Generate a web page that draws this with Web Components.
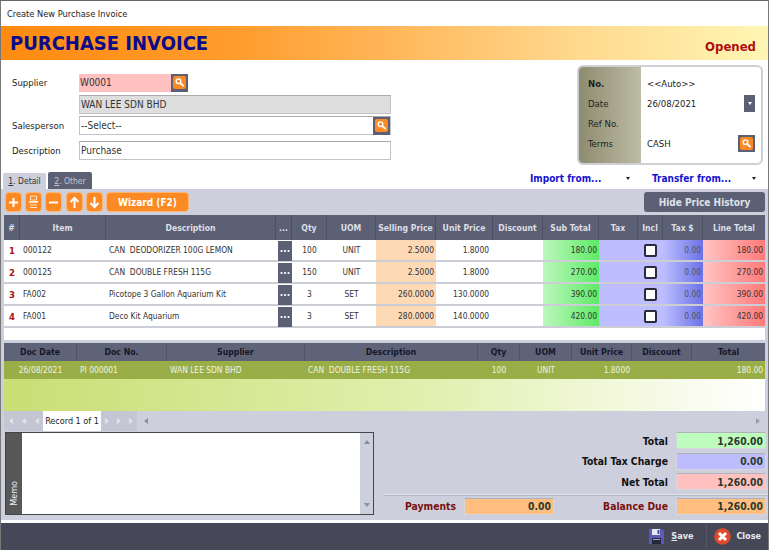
<!DOCTYPE html>
<html><head><meta charset="utf-8"><title>Purchase Invoice</title>
<style>
html,body{margin:0;padding:0;background:#fff}
body{font:9px "DejaVu Sans Condensed","DejaVu Sans",sans-serif;color:#333}
</style></head><body>
<inv-window>
  <inv-titlebar>Create New Purchase Invoice</inv-titlebar>
  <inv-banner title-text="PURCHASE INVOICE" status="Opened"></inv-banner>
  <inv-head></inv-head>
  <inv-tabs></inv-tabs>
  <inv-panel></inv-panel>
  <inv-footer></inv-footer>
</inv-window>
<script>
function def(name, css, html, init){
  customElements.define(name, class extends HTMLElement{
    constructor(){super();const s=this.attachShadow({mode:'open'});
      s.innerHTML='<style>'+css+'</style>'+(typeof html==='function'?html(this):html);}
    connectedCallback(){if(init)init(this)}
  });
}
const FONT='font-family:"DejaVu Sans Condensed","DejaVu Sans",sans-serif;';

def('inv-window',`:host{display:flex;flex-direction:column;width:769px;height:550px;box-sizing:border-box;border-top:1px solid #666;border-left:1px solid #777;border-right:1px solid #777;overflow:hidden;background:#fff;${FONT}}`,`<slot></slot>`);

def('inv-titlebar',`:host{display:flex;align-items:center;height:25px;padding-left:6px;font-size:9.2px;color:#222;flex:none}`,`<slot></slot>`);

def('inv-banner',`:host{display:flex;justify-content:space-between;height:34px;flex:none;padding:0 12px 0 9px;background:linear-gradient(90deg,#ff8a10 0%,#ff9c2c 30%,#ffb85c 52%,#ffd98e 75%,#fff6b4 100%)}
.t{font-size:20px;font-weight:bold;color:#0b0b8c;line-height:35px}
.s{font-size:13px;font-weight:bold;color:#b00d0d;align-self:flex-end;line-height:27px}`,
 h=>`<span class="t">${h.getAttribute('title-text')}</span><span class="s">${h.getAttribute('status')}</span>`);

const searchSvg=`<svg viewBox="0 0 13 13" width="13" height="13"><rect width="13" height="13" rx="2" fill="#fb8a24"/><circle cx="5.5" cy="5.2" r="2.3" fill="none" stroke="#fff" stroke-width="1.4"/><path d="M7.2 7l3 2.6" stroke="#fff" stroke-width="1.8" stroke-linecap="round"/></svg>`;
def('inv-search',`:host{display:flex;align-items:center;justify-content:center;width:17px;height:18px;background:#5c6075;flex:none}`,searchSvg);

def('inv-field',`:host{display:flex;box-sizing:border-box;height:var(--h,19px);width:var(--w,312px);border:1px solid #c4c4c4;border-top-color:#aaa;background:var(--bg,#fff);align-items:center;font-size:10px;color:#333}
span{flex:1;padding:0 0 0 1px;white-space:pre}`,`<span><slot></slot></span><slot name="btn"></slot>`);

def('inv-head',`:host{display:flex;flex:none;height:112px;font-size:9.5px;color:#222}
.left{display:grid;grid-template-columns:67px 312px;padding:13px 0 0 11px;align-content:start;align-items:center}
.left>div{line-height:18px}
.s1{margin-bottom:3px}.s2{margin-bottom:2px}.s3{margin-bottom:6px}
div.s1,div.s3{padding-top:1px}
inv-info{margin:5px 5px 0 auto;flex:none}`,
`<div class="left">
  <div class="s1">Supplier</div><inv-field class="s1" style="--bg:#ffc0c0;--w:109px;--h:18px;border:0">W0001<inv-search slot="btn"></inv-search></inv-field>
  <div class="s2"></div><inv-field class="s2" style="--bg:#dedede;--h:19px">WAN LEE SDN BHD</inv-field>
  <div class="s3">Salesperson</div><inv-field class="s3" style="--h:19px">--Select--<inv-search slot="btn"></inv-search></inv-field>
  <div>Description</div><inv-field style="--h:19px">Purchase</inv-field>
</div>
<inv-info></inv-info>`);

def('inv-info',`:host{display:grid;grid-template-columns:62px 1fr;box-sizing:border-box;width:186px;height:100px;border:2px solid #cfd0d6;border-radius:6px;overflow:hidden;font-size:9.5px;color:#222;background:#fff}
.a{background:linear-gradient(90deg,#8d8c70,#bdbca4);padding:6px 0 0 9px;display:grid;grid-auto-rows:20px;align-items:center;}
.b{padding:6px 0 0 6px;display:grid;grid-auto-rows:20px;align-items:center}
.row{display:flex;justify-content:space-between;align-items:center;padding-right:6px}
.dd{width:11px;height:17px;background:#5c6075;display:flex;align-items:center;justify-content:center}
.dd i{border:2.5px solid transparent;border-top:3px solid #fff;border-bottom:0}
inv-search{height:17px;width:17px;margin-right:0}`,
`<div class="a"><b>No.</b><span>Date</span><span>Ref No.</span><span>Terms</span></div>
<div class="b"><span>&lt;&lt;Auto&gt;&gt;</span><div class="row"><span>26/08/2021</span><div class="dd"><i></i></div></div><span></span><div class="row"><span>CASH</span><inv-search></inv-search></div></div>`);

def('inv-tabs',`:host{display:flex;flex:none;height:17px;padding-left:2px;gap:2px;align-items:flex-end;font-size:8.5px}
.t{height:16px;width:43px;background:#cdd0dc;color:#333;display:flex;align-items:center;justify-content:center;border-radius:2px 2px 0 0}
.o{height:17px;width:44px;background:#5c6075;color:#c4c6d2}
.links{display:grid;grid-template-columns:96px 26px 100px 14px;margin-left:auto;margin-right:2px;font-weight:bold;font-size:10px;color:#1414d0;align-items:center;align-self:flex-start;height:13px}
.ar{width:0;height:0;border:2.5px solid transparent;border-top:3px solid #222;border-bottom:0}`,
`<div class="t"><span><u>1</u>. Detail</span></div><div class="t o"><span><u>2</u>. Other</span></div>
<div class="links"><span>Import from...</span><i class="ar"></i><span>Transfer from...</span><i class="ar"></i></div>`);

def('inv-tool',`:host{display:flex;align-items:center;justify-content:center;box-sizing:border-box;height:20px;width:17px;border-radius:4px;background:#fb8a24;border:1px solid #fdb673;color:#fff;font-weight:bold;font-size:10px;flex:none}`,`<slot></slot>`);

def('inv-toolbar',`:host{display:flex;height:26px;align-items:flex-start;padding:3px 0 0 4px;box-sizing:border-box;flex:none;gap:3px}
.w{width:83px}
.h{margin-left:auto;margin-right:3px;width:121px;height:20px;background:#5c6075;border-radius:3px;color:#dfe1e8;font-weight:bold;font-size:10px;display:flex;align-items:center;justify-content:center}
svg{display:block}`,
`<inv-tool><svg width="11" height="11" viewBox="0 0 11 11"><path d="M5.5 1v9M1 5.5h9" stroke="#fff" stroke-width="2"/></svg></inv-tool>
<inv-tool><svg width="11" height="14" viewBox="0 0 11 14"><path d="M2.5 1h6v4h-6z" stroke="#ffe0c4" stroke-width="1" fill="none"/><path d="M1 7h9" stroke="#fff" stroke-width="1.6"/><path d="M2 10h7M2 12.5h7" stroke="#ffe0c4" stroke-width="1"/></svg></inv-tool>
<inv-tool><svg width="11" height="11" viewBox="0 0 11 11"><path d="M1 5.5h9" stroke="#fff" stroke-width="2"/></svg></inv-tool>
<inv-tool style="margin-left:1px"><svg width="11" height="13" viewBox="0 0 11 13"><path d="M5.5 12V2M1.5 6l4-4 4 4" stroke="#fff" stroke-width="2" fill="none"/></svg></inv-tool>
<inv-tool><svg width="11" height="13" viewBox="0 0 11 13"><path d="M5.5 1v10M1.5 7l4 4 4-4" stroke="#fff" stroke-width="2" fill="none"/></svg></inv-tool>
<inv-tool class="w">Wizard (F2)</inv-tool>
<div class="h">Hide Price History</div>`);

const cols='16px 86px 170px 16px 35px 49px 60px 57px 50px 56px 39px 25px 40px 62px';
const heads=['#','Item','Description','...','Qty','UOM','Selling Price','Unit Price','Discount','Sub Total','Tax','Incl','Tax $','Line Total'];
const rows=[
 ['1','000122','CAN  DEODORIZER 100G LEMON','100','UNIT','2.5000','1.8000','180.00'],
 ['2','000125','CAN  DOUBLE FRESH 115G','150','UNIT','2.5000','1.8000','270.00'],
 ['3','FA002','Picotope 3 Gallon Aquarium Kit','3','SET','260.0000','130.0000','390.00'],
 ['4','FA001','Deco Kit Aquarium','3','SET','280.0000','140.0000','420.00']];
def('inv-grid',`:host{display:block;margin:0 3px;height:125px;background:#fff;flex:none;font-size:8.4px;color:#333}
.h,.r{display:grid;grid-template-columns:${cols}}
.h{height:25px;background:#5c6075;color:#dcdee6;font-weight:bold;font-size:8.6px}
.h span{display:flex;align-items:center;justify-content:center;border-right:1px solid #4c5064;white-space:nowrap}
.h span:last-child{border:0}
.r{height:22px;box-sizing:border-box;border-bottom:2px solid #ccced6}
.r>*{display:flex;align-items:center;white-space:pre;height:20px}
.n{justify-content:center;color:#b01010;font-weight:bold;font-size:9.5px}
.p{padding-left:3px}.c{justify-content:center}.e{justify-content:flex-end;padding-right:2px;box-sizing:border-box}
.m{padding:1px 0 0 2px;box-sizing:border-box}
.m i{display:flex;align-items:center;justify-content:center;width:14px;height:20px;background:#5c6075;color:#fff;font-style:normal;font-weight:bold;font-size:10px;padding-bottom:4px;box-sizing:border-box;flex:none}
.sp{background:#fdd9b6}.st{background:linear-gradient(90deg,#bdf8bd,#5dea66)}
.tx{background:#bdbdff}.tt{background:linear-gradient(90deg,#bdbdff,#6b72e6)}
.lt{background:linear-gradient(90deg,#ffc4c4,#ff7a7a)}
.cb{width:9px;height:9px;border:2px solid #2a2a3a;border-radius:2px;background:#fff}`,
()=>`<div class="h">${heads.map(x=>`<span>${x}</span>`).join('')}</div>`+rows.map(r=>`<div class="r">
<span class="n">${r[0]}</span><span class="p">${r[1]}</span><span class="p">${r[2]}</span><span class="m"><i>...</i></span>
<span class="c">${r[3]}</span><span class="c">${r[4]}</span><span class="e sp">${r[5]}</span><span class="e" style="padding-right:4px">${r[6]}</span><span></span>
<span class="e st">${r[7]}</span><span class="tx"></span><span class="c tx"><i class="cb"></i></span><span class="e tt" style="color:#555">0.00</span><span class="e lt">${r[7]}</span></div>`).join(''));

const hc='73px 90px 138px 173px 42px 52px 60px 60px 73px';
def('inv-history',`:host{display:block;margin:3px 3px 0;flex:none;height:68px;font-size:8.4px;color:#f0f2e0;background:linear-gradient(90deg,#c9de74,#e2efae 55%,#fff 100%)}
.h,.r{display:grid;grid-template-columns:${hc}}
.h{height:18px;background:#5f6378;color:#15182a;font-weight:bold;font-size:8.7px}
.h span{display:flex;align-items:center;justify-content:center;border-right:1px solid #4f5368}
.h span:last-child{border:0}
.r{height:18px;background:#9aae48}
.r span{display:flex;align-items:center;white-space:pre}
.p{padding-left:3px}.c{justify-content:center}.e{justify-content:flex-end;padding-right:2px}`,
`<div class="h"><span>Doc Date</span><span>Doc No.</span><span>Supplier</span><span>Description</span><span>Qty</span><span>UOM</span><span>Unit Price</span><span>Discount</span><span>Total</span></div>
<div class="r"><span class="c">26/08/2021</span><span class="p">PI 000001</span><span class="p">WAN LEE SDN BHD</span><span class="p">CAN  DOUBLE FRESH 115G</span><span class="c">100</span><span class="c">UNIT</span><span class="e">1.8000</span><span></span><span class="e">180.00</span></div>`);

def('inv-nav',`:host{display:flex;align-items:stretch;height:20px;margin:0 3px;flex:none;font-size:9px;color:#222}
.g{display:flex;align-items:center;background:#c4c7d3;justify-content:space-around}
.rec{width:58px;background:#fff;display:flex;align-items:center;justify-content:center}
.a{width:0;height:0;border:3px solid transparent}
.l{border-right:4px solid #8a8d9c;border-left:0}.rr{border-left:4px solid #9a9dac;border-right:0}
.sl{display:flex;flex:1;align-items:center;justify-content:space-between;padding:0 5px 0 7px}
.g i{width:0;height:0;border:3px solid transparent;border-left:0;border-right:4px solid #e2e4ec}
.g i.f{border-right:0;border-left:4px solid #e2e4ec}`,
`<div class="g" style="width:39px"><i></i><i></i><i></i></div><div class="rec">Record 1 of 1</div><div class="g" style="width:36px"><i class="f"></i><i class="f"></i><i class="f"></i></div>
<div class="sl"><span class="a l"></span><span class="a rr"></span></div>`);

def('inv-memo',`:host{display:flex;box-sizing:border-box;width:369px;height:83px;border:1px solid #454545;flex:none;background:#fff}
.s{width:16px;background:#58585a;color:#eee;font-size:9px;display:flex;align-items:flex-end;justify-content:center}
.s span{writing-mode:vertical-rl;transform:rotate(180deg);padding-top:8px}
.b{flex:1}
.sb{width:13px;background:#cdd0dc;display:flex;flex-direction:column;justify-content:space-between;align-items:center;padding:7px 0;box-sizing:border-box}
.u{border:3px solid transparent;border-bottom:4px solid #8a8d9c;border-top:0}
.d{border:3px solid transparent;border-top:4px solid #8a8d9c;border-bottom:0}`,
`<div class="s"><span>Memo</span></div><div class="b"></div><div class="sb"><i class="u"></i><i class="d"></i></div>`);

def('inv-amount',`:host{display:flex;align-items:center;justify-content:flex-end;box-sizing:border-box;width:var(--w,90px);height:17px;padding-right:2px;font-weight:bold;font-size:10.3px;color:#2c3a2c;background:var(--bg);border:1px solid #d6d8e0;border-top-color:#b0b2ba;flex:none}`,`<slot></slot>`);

def('inv-totals',`:host{display:flex;flex-direction:column;width:384px;margin-left:auto;flex:none;font-weight:bold;font-size:10.3px;color:#111}
.r{display:flex;justify-content:flex-end;align-items:center;height:17px;margin-bottom:3.5px;padding-right:2px;gap:8px}
.sep{border-top:1px solid #e2e4ea;border-bottom:1px solid #b6b8c4;margin:0 0 2px -1px;height:0}
.p{color:#7a1010}
.bot{display:flex;align-items:center;justify-content:space-between;padding-right:2px;height:17px}
.bot>div{display:flex;align-items:center;gap:8px}
.pl{margin-left:21px}`,
`<div class="r"><span>Total</span><inv-amount style="--bg:#bdfcbd">1,260.00</inv-amount></div>
<div class="r"><span>Total Tax Charge</span><inv-amount style="--bg:#bdbdfd">0.00</inv-amount></div>
<div class="r"><span>Net Total</span><inv-amount style="--bg:#ffc0c0">1,260.00</inv-amount></div>
<div class="sep"></div>
<div class="bot"><div><span class="p pl">Payments</span><inv-amount style="--bg:#ffbe80">0.00</inv-amount></div><div><span class="p">Balance Due</span><inv-amount style="--bg:#ffbe80">1,260.00</inv-amount></div></div>`);

def('inv-panel',`:host{display:flex;flex-direction:column;height:331px;background:#cdd0dc;flex:none;margin-bottom:3px}
.bottom{display:flex;padding:1px 0 0 4px}`,
`<inv-toolbar></inv-toolbar><inv-grid></inv-grid><inv-history></inv-history><inv-nav></inv-nav><div class="bottom"><inv-memo></inv-memo><inv-totals></inv-totals></div>`);

def('inv-footer',`:host{display:flex;justify-content:flex-end;align-items:center;flex:1;background:#464858;color:#e6e8f0;font-weight:bold;font-size:9px;padding-right:7px;padding-bottom:1px}
.i{display:flex;align-items:center}
svg{display:block}
.sep{width:1px;height:22px;background:#565868;margin:0 7px 0 13px}`,
`<div class="i"><svg width="17" height="17" viewBox="0 0 17 17" style="margin-right:6px"><path d="M1 1h13l2 2v13H1z" fill="#5a5ab8"/><path d="M4 1h8v6H4z" fill="#e8e8f4"/><path d="M9.5 2h2v4h-2z" fill="#4a4a9a"/><path d="M4 10h9v6H4z" fill="#26263a"/><path d="M5 11h7v1H5z" fill="#aaa"/></svg><span><u>S</u>ave</span></div>
<div class="sep"></div>
<div class="i"><svg width="17" height="17" viewBox="0 0 17 17" style="margin-right:5px"><circle cx="8.5" cy="8.5" r="8.3" fill="#e04a2c"/><path d="M5 5l7 7M12 5l-7 7" stroke="#fff" stroke-width="3"/></svg><span>Close</span></div>`);
</script>
</body></html>
